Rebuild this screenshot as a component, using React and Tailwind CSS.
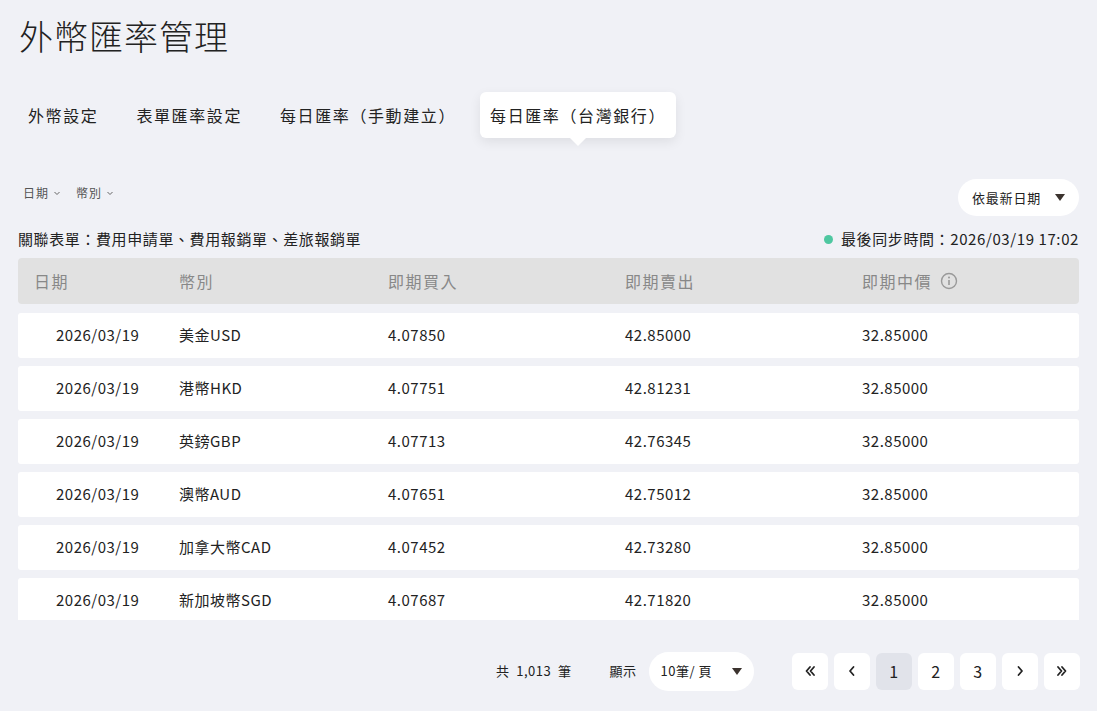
import React from "react";

const F = { fontFamily: '"Noto Sans CJK TC","Noto Sans",sans-serif' };
const rows = [
  ["美金USD","4.07850","42.85000"],
  ["港幣HKD","4.07751","42.81231"],
  ["英鎊GBP","4.07713","42.76345"],
  ["澳幣AUD","4.07651","42.75012"],
  ["加拿大幣CAD","4.07452","42.73280"],
  ["新加坡幣SGD","4.07687","42.71820"],
];
const Chev = () => (
  <svg width="8" height="8" viewBox="0 0 8 8" className="ml-1"><path d="M1.5 3l2.5 2.5L6.5 3" fill="none" stroke="#666" strokeWidth="1"/></svg>
);
const Tri = () => (
  <svg width="10" height="7" viewBox="0 0 10 7"><path d="M0 0h10L5 7z" fill="#3b332e"/></svg>
);
const P = ({ d }) => (
  <svg width="14" height="14" viewBox="0 0 14 14"><path d={d} fill="none" stroke="#222" strokeWidth="1.8" strokeLinecap="round" strokeLinejoin="round"/></svg>
);
const pages = [
  { k: "ff", el: <P d="M7 3L3.5 7 7 11M11 3L7.5 7 11 11"/> },
  { k: "f", el: <P d="M8.5 3L5 7l3.5 4"/> },
  { k: "1", el: "1" },
  { k: "2", el: "2" },
  { k: "3", el: "3" },
  { k: "n", el: <P d="M5.5 3L9 7l-3.5 4"/> },
  { k: "nn", el: <P d="M3 3l3.5 4L3 11M7 3l3.5 4L7 11"/> },
];

export default function App() {
  return (
    <div style={F} className="w-[1097px] h-[711px] bg-[#f0f1f6] overflow-hidden text-[#222]">
      <h1 className="pl-[19px] pt-[14px] text-[34px] leading-[44px] font-light tracking-[1px]">外幣匯率管理</h1>
      <div className="flex items-center ml-[18px] mt-[34px] h-[46px] text-[16px] tracking-[1.6px]">
        <div className="px-[10px]">外幣設定</div>
        <div className="px-[10px] ml-[18px]">表單匯率設定</div>
        <div className="px-[10px] ml-[18px]">每日匯率（手動建立）</div>
        <div className="relative ml-[14px] px-[10px] h-[46px] flex items-center bg-white rounded-[6px] shadow-[0_4px_12px_rgba(0,0,0,0.08)]">
          每日匯率（台灣銀行）
          <div className="absolute left-1/2 -bottom-[8px] -translate-x-1/2 w-0 h-0 border-l-[8px] border-r-[8px] border-t-[8px] border-l-transparent border-r-transparent border-t-white"></div>
        </div>
      </div>
      <div className="flex justify-between items-start mx-[18px] mt-[41px]">
        <div className="flex items-center text-[12px] tracking-[1px] text-[#555] mt-[5px] ml-[5px]">
          <span className="flex items-center">日期<Chev/></span>
          <span className="flex items-center ml-[15px]">幣別<Chev/></span>
        </div>
        <div className="flex items-center gap-[14px] h-[37px] px-[14px] bg-white rounded-full text-[13px] tracking-[0.8px]">依最新日期<Tri/></div>
      </div>
      <div className="flex justify-between items-center mx-[18px] mt-[12px] text-[15px] tracking-[0.6px]">
        <div>關聯表單：費用申請單、費用報銷單、差旅報銷單</div>
        <div className="flex items-center"><span className="w-[9px] h-[9px] rounded-full bg-[#4ec7a0] mr-[8px]"></span>最後同步時間：2026/03/19 17:02</div>
      </div>
      <div className="mx-[18px] mt-[7px] h-[362px] overflow-hidden">
        <div className="flex items-center h-[46px] bg-[#e1e1e1] rounded-[4px] text-[16px] tracking-[1.5px] text-[#888]">
          <div className="w-[161px] pl-[16px]">日期</div>
          <div className="w-[209px]">幣別</div>
          <div className="w-[237px]">即期買入</div>
          <div className="w-[237px]">即期賣出</div>
          <div className="flex items-center">即期中價
            <svg className="ml-[8px]" width="18" height="18" viewBox="0 0 18 18"><circle cx="9" cy="9" r="7.5" fill="none" stroke="#999" strokeWidth="1.4"/><circle cx="9" cy="5.5" r="1" fill="#999"/><path d="M9 8v5" stroke="#999" strokeWidth="1.6"/></svg>
          </div>
        </div>
        <div className="flex flex-col gap-[8px] mt-[9px]">
          {rows.map((r) => (
            <div key={r[0]} className="flex items-center h-[45px] bg-white rounded-[3px] text-[15px] tracking-[0.5px]">
              <div className="w-[161px] pl-[38px]">2026/03/19</div>
              <div className="w-[209px]">{r[0]}</div>
              <div className="w-[237px]">{r[1]}</div>
              <div className="w-[237px]">{r[2]}</div>
              <div>32.85000</div>
            </div>
          ))}
        </div>
      </div>
      <div className="flex items-center justify-end mr-[17px] mt-[32px] text-[13px] tracking-[0.5px]">
        <span>共&nbsp; 1,013 &nbsp;筆</span>
        <span className="ml-[38px]">顯示</span>
        <div className="ml-[12px] flex items-center gap-[20px] h-[39px] px-[12px] bg-white rounded-full">10筆/ 頁<Tri/></div>
        <div className="flex gap-[6px] ml-[38px] text-[16px]">
          {pages.map((p) => (
            <div key={p.k} className={`w-[36px] h-[37px] rounded-[6px] flex items-center justify-center ${p.k==="1"?"bg-[#e1e3ea]":"bg-white"}`}>{p.el}</div>
          ))}
        </div>
      </div>
    </div>
  );
}
